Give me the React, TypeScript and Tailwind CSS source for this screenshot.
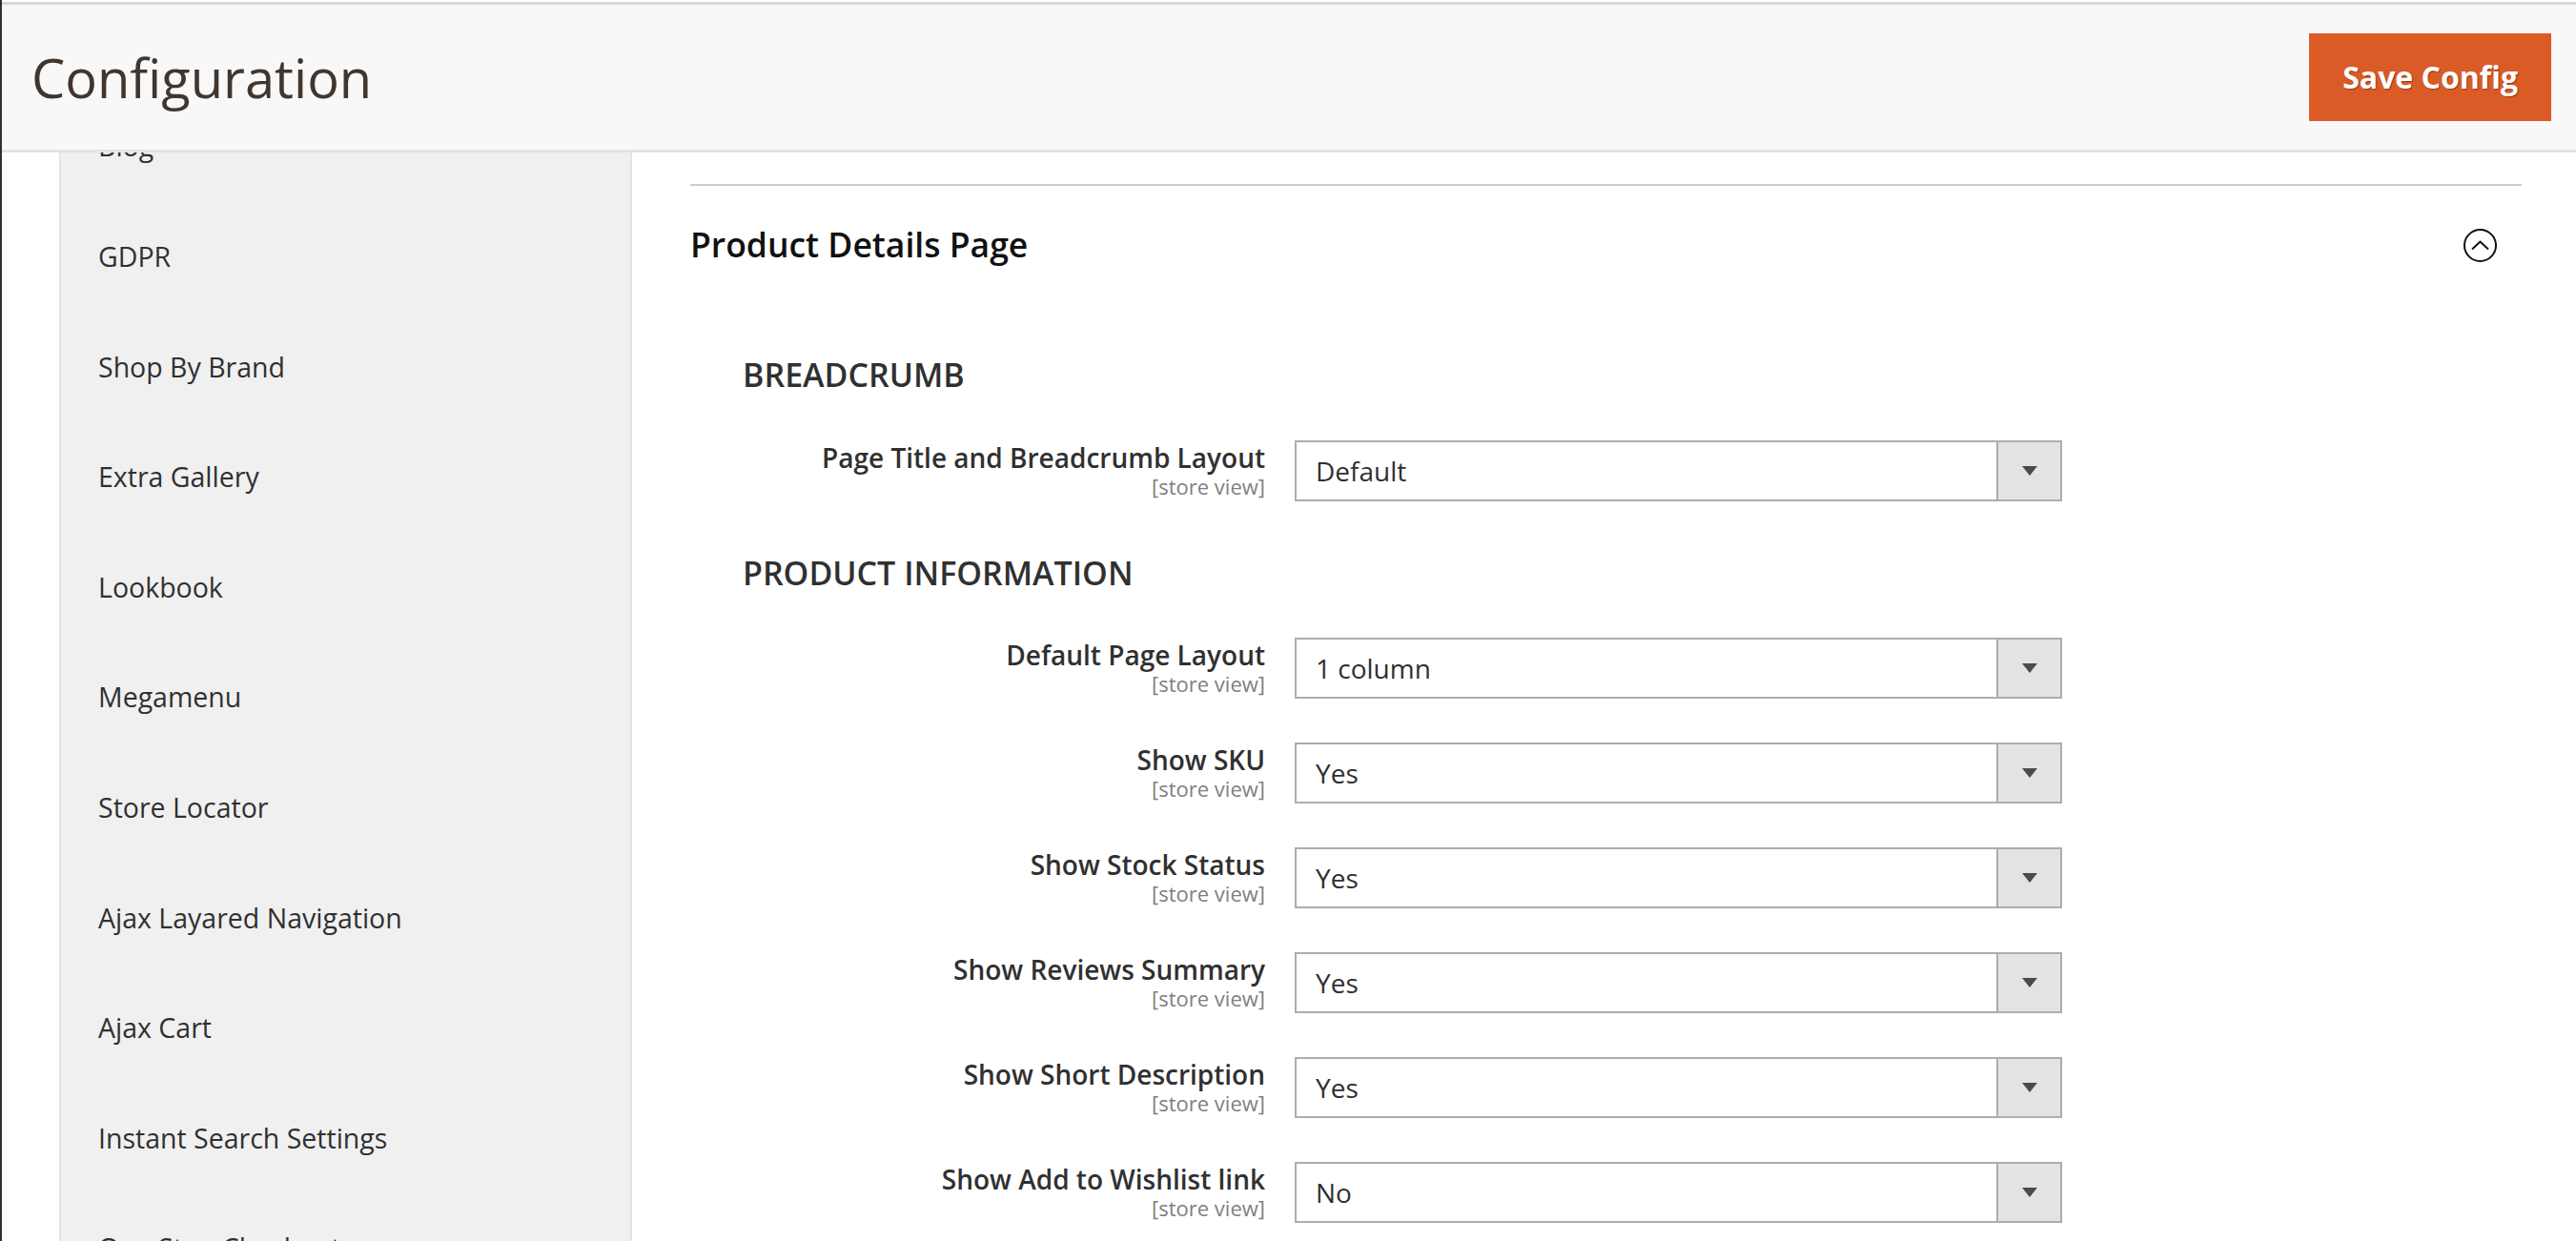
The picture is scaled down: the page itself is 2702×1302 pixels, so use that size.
const navItems = [
  'Blog',
  'GDPR',
  'Shop By Brand',
  'Extra Gallery',
  'Lookbook',
  'Megamenu',
  'Store Locator',
  'Ajax Layared Navigation',
  'Ajax Cart',
  'Instant Search Settings',
  'One Step Checkout',
];

const productRows = [
  { label: 'Default Page Layout', value: '1 column' },
  { label: 'Show SKU', value: 'Yes' },
  { label: 'Show Stock Status', value: 'Yes' },
  { label: 'Show Reviews Summary', value: 'Yes' },
  { label: 'Show Short Description', value: 'Yes' },
  { label: 'Show Add to Wishlist link', value: 'No' },
];

const SelectBox = ({ value }: { value: string }) => (
  <div className="flex h-[64px] w-[805px] items-stretch border-2 border-[#adadad] bg-white">
    <div className="flex flex-1 items-center pl-[20px] text-[28px] text-[#303030]">{value}</div>
    <div className="flex w-[67px] items-center justify-center border-l-2 border-[#adadad] bg-[#e3e3e3]">
      <svg width="16" height="10" viewBox="0 0 16 10" aria-hidden>
        <polygon points="0,0 16,0 8,10" fill="#514943" />
      </svg>
    </div>
  </div>
);

const FieldRow = ({ label, value }: { label: string; value: string }) => (
  <div className="flex items-start gap-[31px]">
    <div className="flex w-[548px] flex-col items-end text-right">
      <span className="text-[28px] font-semibold leading-[36px] text-[#303030]">{label}</span>
      <span className="text-[22px] leading-[24px] text-[#808080]">[store view]</span>
    </div>
    <SelectBox value={value} />
  </div>
);

export default function App() {
  return (
    <div className="flex h-[1302px] w-full flex-col overflow-hidden border-l-2 border-[#303030] bg-white font-['Open_Sans',sans-serif]">
      {/* page header */}
      <header className="mt-[2px] flex h-[158px] flex-none items-center justify-between border-y-[3px] border-t-[#d6d6d6] border-b-[#e3e3e3] bg-[#f8f8f8] pl-[31px] pr-[26px]">
        <h1 className="text-[56px] font-normal text-[#41362f]">Configuration</h1>
        <button className="flex h-[92px] items-center bg-[#db5b27] px-[35px] text-[32px] font-bold text-white [text-shadow:1px_1px_1px_rgba(0,0,0,0.35)]">
          Save Config
        </button>
      </header>

      <div className="flex min-h-0 flex-1">
        <div className="w-[60px] flex-none" />

        {/* config nav */}
        <aside className="w-[601px] flex-none overflow-hidden border-x-2 border-[#e3e3e3] bg-[#f0f0f0]">
          <ul className="-mt-[64px]">
            {navItems.map((item) => (
              <li key={item} className="flex h-[115.6px] items-center pl-[39px] text-[28.5px] text-[#303030]">
                {item}
              </li>
            ))}
          </ul>
        </aside>

        {/* section content */}
        <main className="min-w-0 flex-1 pl-[61px] pr-[57px]">
          <div className="mt-[33px] border-t-2 border-[#cccccc]">
            <div className="flex h-[124px] items-center justify-between pr-[25px]">
              <h2 className="text-[35.5px] font-semibold text-[#111]">Product Details Page</h2>
              <svg width="37" height="37" viewBox="0 0 37 37" aria-hidden>
                <circle cx="18.5" cy="18.5" r="16.5" fill="none" stroke="#111" strokeWidth="2" />
                <polyline points="10,22.5 18.5,14.5 27,22.5" fill="none" stroke="#111" strokeWidth="2" />
              </svg>
            </div>

            <div className="pl-[55px]">
              <h3 className="mt-[51px] h-[46px] text-[34px] font-semibold uppercase leading-[46px] text-[#303030]">
                Breadcrumb
              </h3>
              <div className="mt-[46px]">
                <FieldRow label="Page Title and Breadcrumb Layout" value="Default" />
              </div>

              <h3 className="mt-[52px] h-[46px] text-[34px] font-semibold uppercase leading-[46px] text-[#303030]">
                Product Information
              </h3>
              <div className="mt-[45px] flex flex-col gap-[46px]">
                {productRows.map((row) => (
                  <FieldRow key={row.label} label={row.label} value={row.value} />
                ))}
              </div>
            </div>
          </div>
        </main>
      </div>
    </div>
  );
}
